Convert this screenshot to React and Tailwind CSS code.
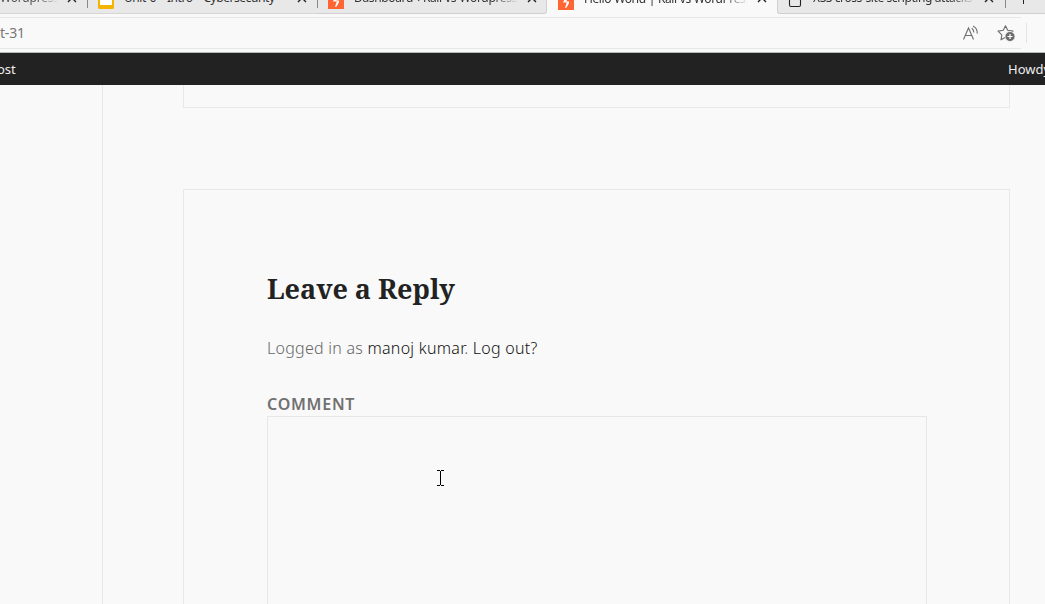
import React from "react";

const SANS = "font-['Noto_Sans','Open_Sans',sans-serif]";

function CloseIcon() {
  return (
    <svg width="10" height="10" viewBox="0 0 10 10" className="shrink-0" fill="none" stroke="#222" strokeWidth="1.4">
      <path d="M1 1l8 8M9 1l-8 8" />
    </svg>
  );
}

function SlidesIcon() {
  return (
    <svg width="16" height="16" viewBox="0 0 16 16" className="block">
      <rect width="16" height="16" rx="1.5" fill="#f5b400" />
      <rect x="2" y="4" width="12" height="8" fill="#fff" />
    </svg>
  );
}

function BoltIcon() {
  return (
    <svg width="16" height="16" viewBox="0 0 16 16" className="block">
      <rect width="16" height="16" fill="#ff6633" />
      <path d="M8.5 1L5 8.5H8.8L7 13.8H8.4L11 9.3V7.5H8.5L10 1Z" fill="#fff" />
    </svg>
  );
}

function PageIcon() {
  return (
    <svg width="16" height="16" viewBox="0 0 16 16" className="block" fill="none" stroke="#222" strokeWidth="1.1">
      <rect x="2.5" y="1.5" width="11" height="12" rx="1.5" />
    </svg>
  );
}

function Tab({ icon, title, className, textClass, iconClass, fade }) {
  return (
    <div className={`relative flex h-8 w-[230px] shrink-0 items-center pl-[11px] ${className}`}>
      <div className={`h-4 w-4 shrink-0 ${iconClass}`}>{icon}</div>
      <div className={`ml-[10px] mt-[1px] w-[164px] shrink-0 overflow-hidden whitespace-nowrap text-[12px] leading-5 text-[#333] ${textClass} ${fade ? "[mask-image:linear-gradient(to_right,black_85%,transparent)]" : ""}`}>
        {title}
      </div>
      <div className="ml-[9px]"><CloseIcon /></div>
    </div>
  );
}

function TabStrip() {
  return (
    <div className="flex h-[14px] items-end overflow-hidden bg-[#f9f9f9]">
      <div className="flex h-8 w-[87px] shrink-0 items-center border-b border-[#d6d6d6] bg-[#e8e8e8]">
        <div className="mt-[1px] w-[58px] overflow-hidden whitespace-nowrap text-[12px] leading-5 tracking-[-0.2px] text-[#555] [mask-image:linear-gradient(to_right,black_65%,transparent)]">Wordpress</div>
        <div className="ml-[9px]"><CloseIcon /></div>
      </div>
      <Tab icon={<SlidesIcon />} iconClass="mt-[7px]" title="Unit 6 - Intro - Cybersecurity" className="border-b border-[#d6d6d6] bg-[#e8e8e8] before:absolute before:left-0 before:top-0 before:h-[26px] before:w-px before:bg-[#888]" textClass="tracking-[-0.45px] [word-spacing:1.1px]" />
      <Tab icon={<BoltIcon />} iconClass="mt-[7px]" title="Dashboard ‹ Kali vs Wordpress" className="rounded-br-[3px] border-b border-r border-[#d0d0d0] bg-[#e8e8e8] before:absolute before:left-0 before:top-0 before:h-[26px] before:w-px before:bg-[#888]" textClass="tracking-[-0.35px] [word-spacing:0.5px]" fade />
      <Tab icon={<BoltIcon />} iconClass="mt-[7px]" title="Hello World | Kali vs WordPress" className="bg-[#f9f9f9]" textClass="tracking-[-0.4px] [word-spacing:0.3px]" fade />
      <div className="flex h-8 grow items-center rounded-bl-[3px] border-b border-l border-[#d0d0d0] bg-[#e8e8e8] pl-[9px]">
        <div className="mt-[6px] h-4 w-4 shrink-0"><PageIcon /></div>
        <div className="ml-[10px] mt-[1px] w-[162px] shrink-0 overflow-hidden whitespace-nowrap text-[12px] leading-5 tracking-[-0.4px] text-[#333] [mask-image:linear-gradient(to_right,black_85%,transparent)]">XSS cross-site scripting attacks</div>
        <div className="ml-[9px] mr-[11px]"><CloseIcon /></div>
        <div className="mb-[5px] h-[26px] w-px shrink-0 bg-[#888]" />
        <svg width="12" height="12" viewBox="0 0 12 12" className="ml-[12px] shrink-0" stroke="#222" strokeWidth="1">
          <path d="M5.5 0v12M0 5.5h11" />
        </svg>
      </div>
    </div>
  );
}

function AddressBar() {
  return (
    <div className="flex h-[39px] items-start border-b border-[#b5bcb8] bg-[#f9f9f9] pt-[3px]">
      <div className="flex h-8 w-[1021px] items-center justify-between border-y border-[#e7e7e7] pr-[6px]">
        <span className="text-[14px] leading-5 tracking-[-0.2px] text-[#777]">t-31</span>
        <div className="flex items-center gap-[18px]">
          <svg width="18" height="18" viewBox="0 0 18 18" fill="none" stroke="#707070" strokeWidth="1.1">
            <path d="M2.5 15.5L7.5 4L12.5 15.5M4.3 11.5H10.7" />
            <path d="M10.8 4.2Q12.8 5.8 12.8 8.6M12 2Q16.6 4.2 16.2 9.6" />
          </svg>
          <svg width="18" height="18" viewBox="0 0 18 18">
            <path d="M8.5 1.8L10.7 6.3L16 7.1L12.2 10.8L13 15.8L8.5 13.3L4 15.8L4.8 10.8L1 7.1L6.3 6.3Z" fill="none" stroke="#6c6c6c" strokeWidth="1.1" strokeLinejoin="round" />
            <circle cx="13" cy="12.5" r="5" fill="#6c6c6c" stroke="#f9f9f9" strokeWidth=".8" />
            <path d="M13 10v5M10.5 12.5h5" stroke="#fff" strokeWidth="1.2" />
          </svg>
        </div>
      </div>
      <div className="ml-[5px] mt-[6px] h-5 w-px bg-[#e4e4e4]" />
    </div>
  );
}

export default function App() {
  return (
    <div className={`flex h-[604px] w-[1045px] flex-col overflow-hidden bg-[#f9f9f9] ${SANS}`}>
      <TabStrip />
      <AddressBar />
      <div className="flex h-8 shrink-0 items-center justify-between overflow-hidden bg-[#222] pt-[2px] text-[13px] text-[#eee]">
        <span className="-ml-[3px]">ost</span>
        <span className="w-[37px] overflow-hidden whitespace-nowrap">Howdy,</span>
      </div>
      <div className="flex min-h-0 grow">
        <div className="w-[103px] shrink-0 border-r border-[#e8e8e8]" />
        <main className="flex w-[907px] shrink-0 flex-col pl-[80px]">
          <div className="h-[23px] shrink-0 border-x border-b border-[#e8e8e8]" />
          <section className="mt-[81px] flex grow flex-col border-x border-t border-[#e8e8e8] pl-[83px] pr-[82px] pt-[79px]">
            <h2 className="h-10 whitespace-nowrap font-['Noto_Serif','DejaVu_Serif_Condensed','DejaVu_Serif',serif] text-[27px] font-bold leading-10 tracking-[-0.05px] text-[#222]">Leave a Reply</h2>
            <p className="mt-[27px] h-6 whitespace-nowrap text-[16px] font-light leading-6 tracking-[0.26px] text-[#666]">
              Logged in as <a className="text-[#111]">manoj kumar</a>. <a className="text-[#111]">Log out?</a>
            </p>
            <label className="mt-[32px] h-6 text-[16px] font-semibold leading-6 tracking-[0.75px] text-[#707070]">COMMENT</label>
            <div className="grow border-x border-t border-[#e7e7e7]">
              <svg width="7" height="16" viewBox="0 0 7 16" className="ml-[169px] mt-[53px]" fill="none" stroke="#000" shapeRendering="crispEdges">
                <path d="M0 .5h3M4 .5h3M0 15.5h3M4 15.5h3M3.5 1v14" />
              </svg>
            </div>
          </section>
        </main>
      </div>
    </div>
  );
}
